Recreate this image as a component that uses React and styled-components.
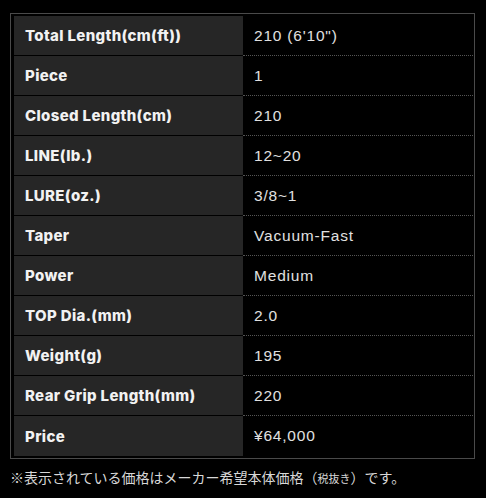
import React from "react";
import styled, { createGlobalStyle } from "styled-components";

const GlobalStyle = createGlobalStyle`
	html, body {
		margin: 0;
		padding: 0;
		background-color: #000;
	}
`;

const Page = styled.div`
	width: 486px;
	height: 498px;
	box-sizing: border-box;
	padding: 13px 11px 0 10px;
	background-color: #000;
`;

const SpecTable = styled.div`
	display: grid;
	grid-template-columns: 229px 1fr;
	border: 1px solid #4a4a4a;
	padding: 2px 1px 2px 3px;
`;

const HeadCell = styled.div`
	height: 40px;
	box-sizing: border-box;
	display: flex;
	align-items: center;
	padding-left: 11px;
	background-color: #262626;
	border-bottom: ${(p) => (p.$last ? "none" : "1px solid #000")};
	color: #f2f2f2;
	font-family: Inter, "Liberation Sans", sans-serif;
	font-weight: 800;
	font-size: 15px;
	letter-spacing: 0.35px;
`;

const ValueCell = styled.div`
	height: 40px;
	box-sizing: border-box;
	display: flex;
	align-items: center;
	padding-left: 11px;
	border-bottom: ${(p) => (p.$last ? "none" : "1px dotted #555")};
	color: #e0e0e0;
	font-family: "Liberation Sans", Arial, sans-serif;
	font-size: 15.5px;
	letter-spacing: 0.8px;
`;

const Note = styled.p`
	margin: 8px 0 0;
	color: #d8d8d8;
	font-family: "Noto Sans CJK JP", sans-serif;
	font-size: 14px;
	line-height: 20px;

	& > small {
		font-size: 11px;
	}
`;

const specs = [
	["Total Length(cm(ft))", "210 (6'10\")"],
	["Piece", "1"],
	["Closed Length(cm)", "210"],
	["LINE(lb.)", "12~20"],
	["LURE(oz.)", "3/8~1"],
	["Taper", "Vacuum-Fast"],
	["Power", "Medium"],
	["TOP Dia.(mm)", "2.0"],
	["Weight(g)", "195"],
	["Rear Grip Length(mm)", "220"],
	["Price", "¥64,000"],
];

export default function App() {
	return (
		<Page>
			<GlobalStyle />
			<SpecTable>
				{specs.map(([label, value], i) => {
					const last = i === specs.length - 1;
					return (
						<React.Fragment key={label}>
							<HeadCell $last={last}>{label}</HeadCell>
							<ValueCell $last={last}>{value}</ValueCell>
						</React.Fragment>
					);
				})}
			</SpecTable>
			<Note>
				※表示されている価格はメーカー希望本体価格（<small>税抜き</small>）です。
			</Note>
		</Page>
	);
}
